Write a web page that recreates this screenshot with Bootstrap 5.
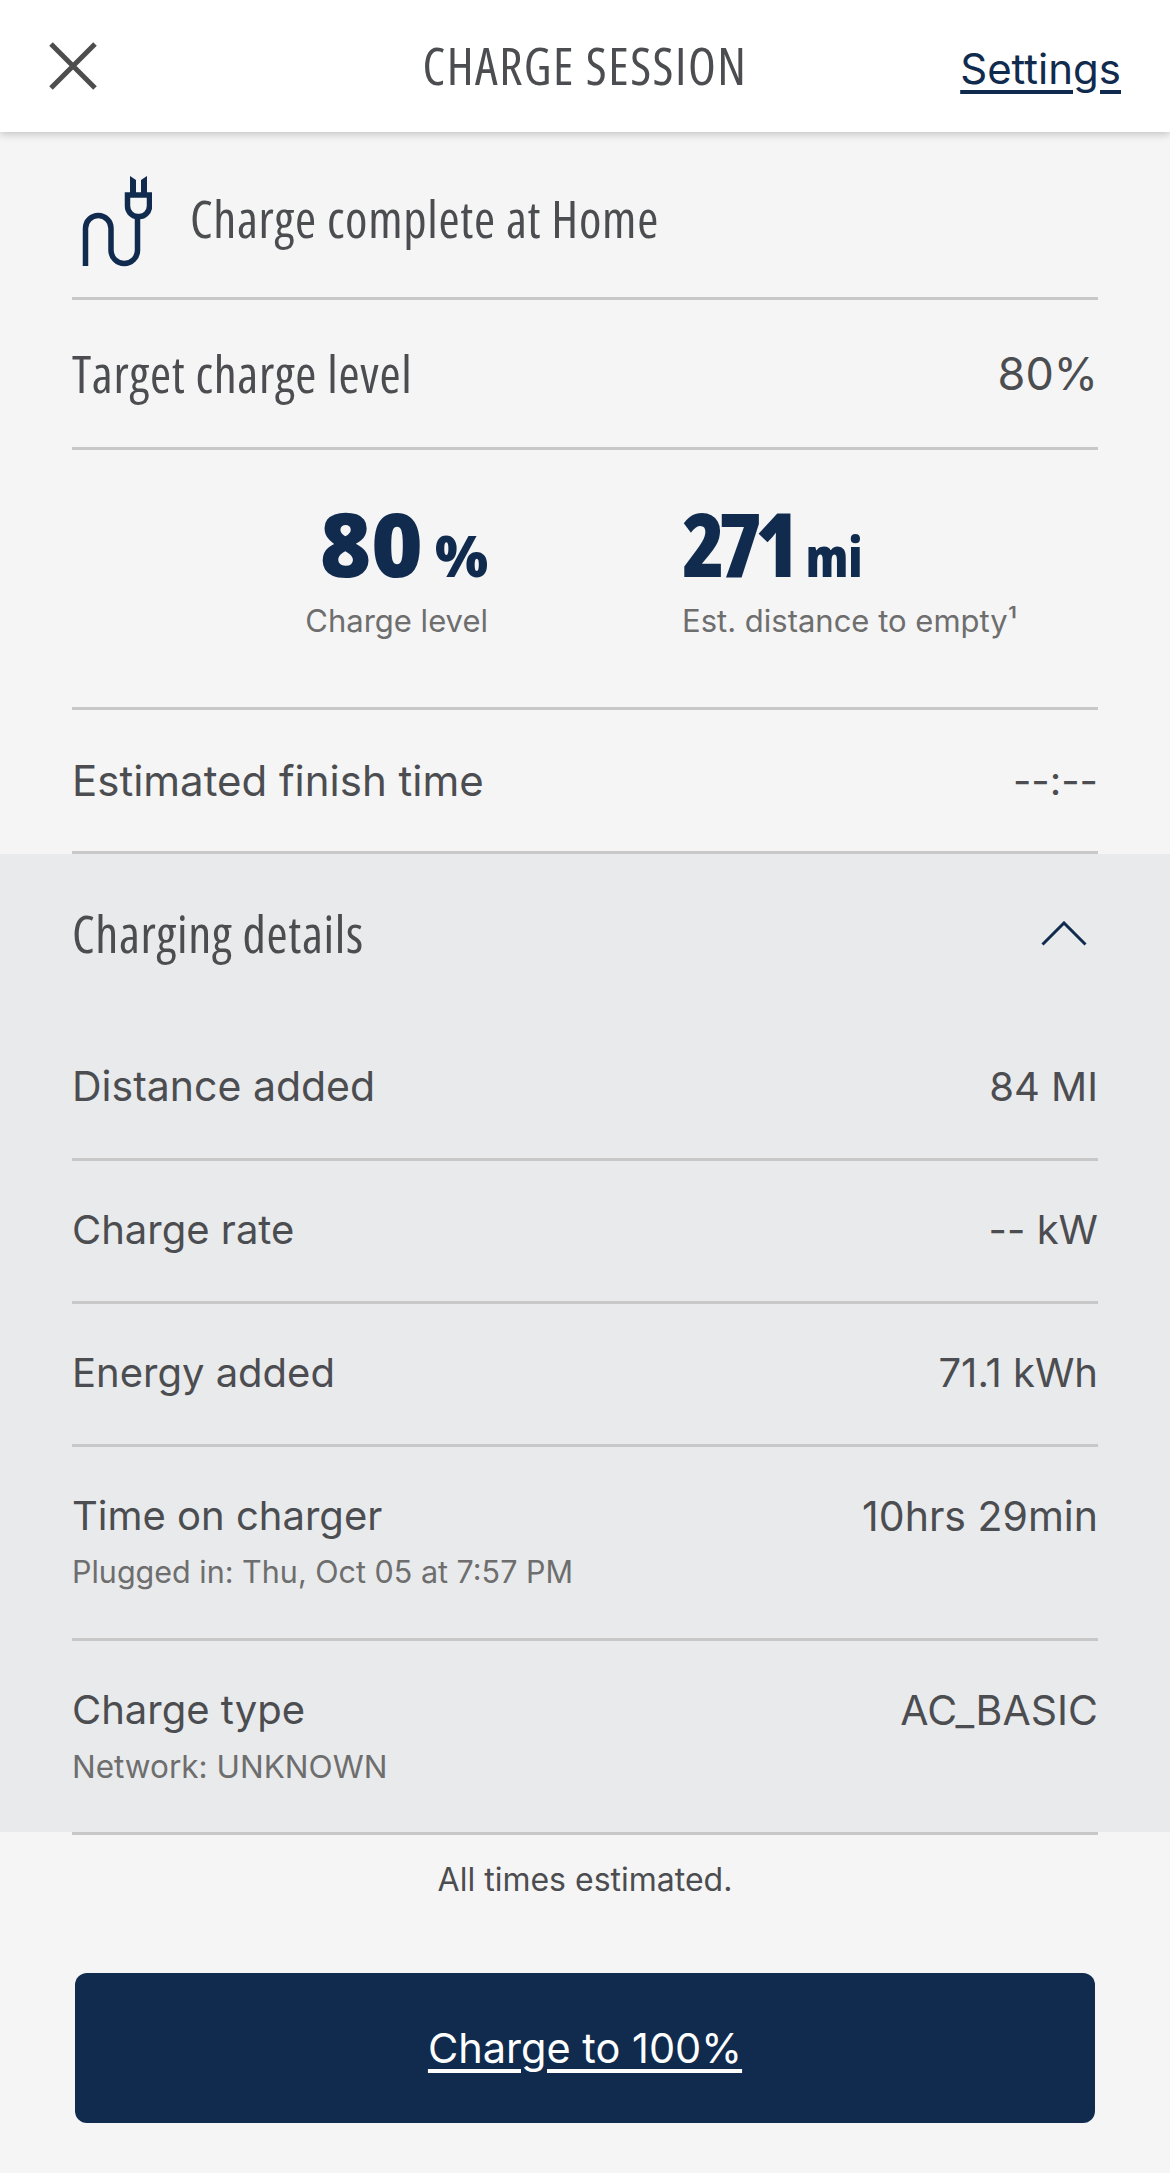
<!DOCTYPE html>
<html lang="en">
<head>
<meta charset="utf-8">
<title>Charge session</title>
<link href="https://cdn.jsdelivr.net/npm/bootstrap@5.3.0/dist/css/bootstrap.min.css" rel="stylesheet">
<style>
body{background:#f5f5f5;color:#4c4d50;font-family:Inter,"Liberation Sans",sans-serif;font-size:40px;height:2173px}
.nrw{font-family:"Open Sans","Liberation Sans",sans-serif;font-stretch:75%;font-size:51px;letter-spacing:.7px}
.top-bar{height:132px;background:#fff;box-shadow:0 2px 8px rgba(0,0,0,.22);padding:0 49px 0 49px;position:relative}
.top-title{letter-spacing:1.5px;line-height:1;margin-top:-2px}
.top-link{font-size:42px;color:#102b4e;text-decoration:underline;text-underline-offset:6px;margin-top:4px}
.band{margin:0 72px}
.ln{border-bottom:3px solid #c8c8c8}
.st-row{height:168px;gap:38px;padding-left:10px;padding-top:14px}
.st-text{margin-top:-6px}
.tg-row{height:150px}
.tg-val{font-size:45px}
.mt-row{height:260px;padding-top:51px}
.mt-nums{letter-spacing:0}
.mt-cell-a{width:256px;margin-left:160px;text-align:right}
.mt-cell-b{margin-left:194px}
.mt-big{font-size:88px;line-height:84px;font-weight:800;color:#102b4e}
.mt-big-wide{font-stretch:100%}
.mt-big-tight{font-stretch:75%;letter-spacing:-7px}
.mt-unit{font-size:54px;font-weight:800;color:#102b4e;margin-left:14px;font-stretch:75%}
.mt-unit-wide{font-stretch:100%;font-size:56px;margin-left:12px}
.mt-cap{font-size:31px;color:#6e6e6e;margin-top:1px}
.fin-row{height:144px}
.fin-label{font-size:42px}
.dt-wrap{background:#e9eaec;height:978px}
.dt-head{height:164px}
.dt-head-label{margin-top:-6px}
.dt-chev{margin-right:11px;margin-top:-5px}
.dt-row{height:143px;padding-bottom:3px}
.dt-row-tall{height:194px;padding-top:39px}
.dt-row-last{height:191px;padding-top:39px}
.dt-sub{font-size:30.5px;color:#6e6e6e;margin-top:3px}
.dt-sub-wide{font-size:31.5px}
.dt-wide{font-size:41px}
.foot-note{font-size:32px;text-align:center;padding-top:25px;line-height:40px;height:138px}
.go-btn{margin:0 75px;height:150px;background:#102b4e;color:#fff;border-radius:12px;font-size:41.5px;text-decoration:underline;text-underline-offset:6px;border:0;display:flex;align-items:center;justify-content:center}
.go-btn:hover{background:#102b4e;color:#fff}
</style>
</head>
<body>
<div class="top-bar d-flex align-items-center justify-content-between">
  <svg width="48" height="48" viewBox="0 0 48 48" aria-label="Close"><path d="M2 2 46 46M46 2 2 46" stroke="#4d4d4d" stroke-width="5" fill="none"/></svg>
  <div class="top-title nrw position-absolute start-50 translate-middle-x">CHARGE SESSION</div>
  <a class="top-link" href="#">Settings</a>
</div>
<div class="band">
  <div class="st-row ln d-flex align-items-center">
    <svg width="70" height="92" viewBox="0 0 70 92" aria-hidden="true">
      <path d="M3.5 90V52.3A12.75 12.75 0 0 1 29 52.3V74.25A13.25 13.25 0 0 0 55.5 74.25V42" fill="none" stroke="#102b4e" stroke-width="5.5"/>
      <path d="M45.5 19H67.5V30A10 10.5 0 0 1 56.5 40.5A10 10.5 0 0 1 45.5 30Z" fill="none" stroke="#102b4e" stroke-width="5.5"/>
      <path d="M48 0 54 4V17H48ZM65 0 59 4V17H65Z" fill="#102b4e"/>
    </svg>
    <div class="nrw st-text">Charge complete at Home</div>
  </div>
  <div class="tg-row ln d-flex align-items-center justify-content-between">
    <div class="nrw">Target charge level</div>
    <div class="tg-val">80%</div>
  </div>
  <div class="mt-row ln d-flex">
    <div class="mt-cell-a">
      <div class="nrw mt-nums"><span class="mt-big mt-big-wide">80</span><span class="mt-unit mt-unit-wide">%</span></div>
      <div class="mt-cap">Charge level</div>
    </div>
    <div class="mt-cell-b">
      <div class="nrw mt-nums"><span class="mt-big mt-big-tight">271</span><span class="mt-unit">mi</span></div>
      <div class="mt-cap">Est. distance to empty¹</div>
    </div>
  </div>
  <div class="fin-row ln d-flex align-items-center justify-content-between">
    <div class="fin-label">Estimated finish time</div>
    <div>--:--</div>
  </div>
</div>
<div class="dt-wrap">
  <div class="band">
    <div class="dt-head d-flex align-items-center justify-content-between">
      <div class="nrw dt-head-label">Charging details</div>
      <svg class="dt-chev" width="46" height="25" viewBox="0 0 46 25" aria-hidden="true"><path d="M1.5 23.5 23 2 44.5 23.5" fill="none" stroke="#102b4e" stroke-width="3"/></svg>
    </div>
    <div class="dt-row ln d-flex align-items-center justify-content-between"><div class="dt-wide">Distance added</div><div>84 MI</div></div>
    <div class="dt-row ln d-flex align-items-center justify-content-between"><div>Charge rate</div><div>-- kW</div></div>
    <div class="dt-row ln d-flex align-items-center justify-content-between"><div>Energy added</div><div>71.1 kWh</div></div>
    <div class="dt-row-tall ln d-flex align-items-start justify-content-between">
      <div><div>Time on charger</div><div class="dt-sub">Plugged in: Thu, Oct 05 at 7:57 PM</div></div>
      <div class="dt-wide">10hrs 29min</div>
    </div>
    <div class="dt-row-last d-flex align-items-start justify-content-between">
      <div><div>Charge type</div><div class="dt-sub dt-sub-wide">Network: UNKNOWN</div></div>
      <div class="dt-wide">AC_BASIC</div>
    </div>
  </div>
</div>
<div class="band ln"></div>
<div class="foot-note">All times estimated.</div>
<a class="go-btn btn" href="#">Charge to 100%</a>
<script src="https://cdn.jsdelivr.net/npm/bootstrap@5.3.0/dist/js/bootstrap.bundle.min.js"></script>
</body>
</html>
